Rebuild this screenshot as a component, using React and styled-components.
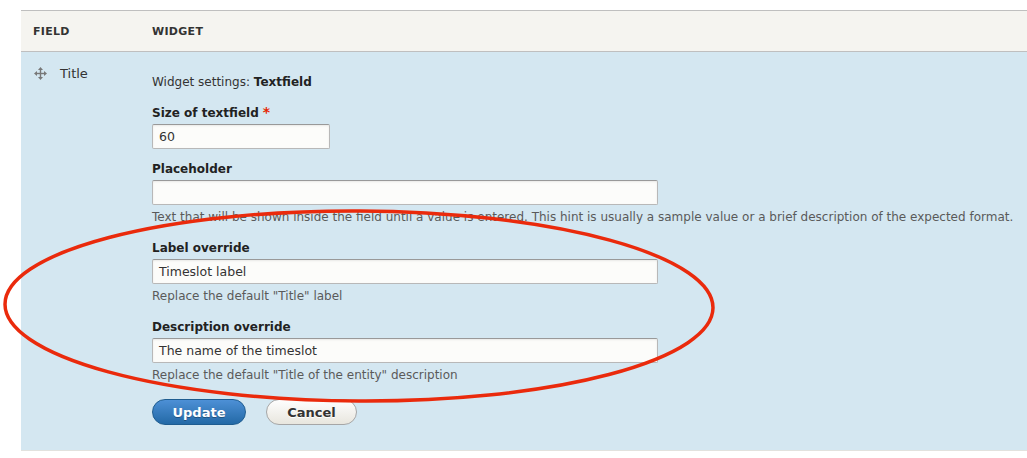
import React from 'react';
import styled, { createGlobalStyle } from 'styled-components';

const GlobalStyle = createGlobalStyle`
  html, body {
    margin: 0;
    padding: 0;
    background: #ffffff;
  }
  body {
    font-family: "DejaVu Sans", Verdana, sans-serif;
    color: #222;
  }
`;

const Page = styled.div`
  position: relative;
  width: 1027px;
  height: 458px;
  padding: 10px 0 0 21px;
  box-sizing: border-box;
  overflow: hidden;
`;

const Table = styled.div`
  border-top: 1px solid #bfbfbf;
`;

const HeaderRow = styled.div`
  display: grid;
  grid-template-columns: 119px 1fr;
  height: 40px;
  align-items: center;
  background: #f5f4f0;
  border-bottom: 1px solid #bfbfbf;
`;

const HeaderCell = styled.div`
  padding-left: 12px;
  font-size: 11px;
  font-weight: bold;
  color: #333;
  letter-spacing: 0.3px;
  text-transform: uppercase;
`;

const BodyRow = styled.div`
  display: grid;
  grid-template-columns: 119px 1fr;
  height: 398px;
  background: #d4e7f1;
  border-bottom: 1px solid #e2e2de;
`;

const FieldCell = styled.div`
  display: flex;
  align-items: center;
  gap: 13px;
  padding: 12px 0 0 13px;
  height: 18px;
  font-size: 13px;
  color: #333;
`;

const WidgetCell = styled.div`
  padding: 21px 0 0 12px;
  font-size: 12px;
`;

const Settings = styled.div`
  line-height: 18px;
  color: #333;
  margin-bottom: 12px;

  b {
    color: #222;
  }
`;

const FormItem = styled.div`
  margin-bottom: ${(p) => (p.$tight ? 11 : 14)}px;
`;

const Label = styled.div`
  font-weight: bold;
  line-height: 18px;
  color: #222;
  margin-bottom: 2px;
`;

const Required = styled.span`
  color: #e62600;
  font-size: 14px;
  margin-left: 4px;
`;

const Input = styled.div`
  box-sizing: border-box;
  width: ${(p) => p.$width}px;
  height: 25px;
  padding: 0 6px;
  display: flex;
  align-items: center;
  background: #fcfcfa;
  border: 1px solid #b8b8b8;
  border-top-color: #999;
  border-radius: 2px;
  box-shadow: inset 0 1px 2px rgba(0, 0, 0, 0.08);
  font-size: 12.5px;
  color: #333;
`;

const Description = styled.div`
  margin-top: 4px;
  font-size: 12px;
  line-height: 16px;
  color: #5a5a5a;
  white-space: nowrap;
`;

const Actions = styled.div`
  display: flex;
  gap: 20px;
  margin-top: 16px;
`;

const Button = styled.div`
  box-sizing: border-box;
  height: 26px;
  display: flex;
  align-items: center;
  justify-content: center;
  border-radius: 20px;
  font-size: 13px;
  font-weight: bold;
  width: ${(p) => p.$width}px;
  color: ${(p) => (p.$primary ? '#fff' : '#333')};
  border: 1px solid ${(p) => (p.$primary ? '#1e5c90' : '#a6a6a6')};
  background: ${(p) =>
    p.$primary
      ? 'linear-gradient(#4d90d6, #2369a6)'
      : 'linear-gradient(#fefefe, #e8e6de)'};
  text-shadow: ${(p) => (p.$primary ? '0 1px 0 rgba(0,0,0,0.3)' : '0 1px 0 #fff')};
`;

const Overlay = styled.svg`
  position: absolute;
  left: 0;
  top: 0;
  pointer-events: none;
`;

const DragIcon = () => (
  <svg width="13" height="13" viewBox="0 0 13 13" fill="#787878">
    <rect x="5.8" y="2" width="1.4" height="9" />
    <rect x="2" y="5.8" width="9" height="1.4" />
    <path d="M6.5 0 L9 3 L4 3 Z" />
    <path d="M6.5 13 L9 10 L4 10 Z" />
    <path d="M0 6.5 L3 4 L3 9 Z" />
    <path d="M13 6.5 L10 4 L10 9 Z" />
  </svg>
);

export default function App() {
  return (
    <>
      <GlobalStyle />
      <Page>
        <Table>
          <HeaderRow>
            <HeaderCell>Field</HeaderCell>
            <HeaderCell>Widget</HeaderCell>
          </HeaderRow>
          <BodyRow>
            <div>
              <FieldCell>
                <DragIcon />
                Title
              </FieldCell>
            </div>
            <WidgetCell>
              <Settings>
                Widget settings: <b>Textfield</b>
              </Settings>
              <FormItem $tight>
                <Label>
                  Size of textfield<Required>*</Required>
                </Label>
                <Input $width={178}>60</Input>
              </FormItem>
              <FormItem>
                <Label>Placeholder</Label>
                <Input $width={506} />
                <Description>
                  Text that will be shown inside the field until a value is entered. This hint is usually a sample value or a brief description of the expected format.
                </Description>
              </FormItem>
              <FormItem>
                <Label>Label override</Label>
                <Input $width={506}>Timeslot label</Input>
                <Description>Replace the default "Title" label</Description>
              </FormItem>
              <FormItem>
                <Label>Description override</Label>
                <Input $width={506}>The name of the timeslot</Input>
                <Description>Replace the default "Title of the entity" description</Description>
              </FormItem>
              <Actions>
                <Button $primary $width={94}>Update</Button>
                <Button $width={91}>Cancel</Button>
              </Actions>
            </WidgetCell>
          </BodyRow>
        </Table>
        <Overlay width="1027" height="458">
          <ellipse
            cx="359"
            cy="306"
            rx="354"
            ry="95"
            fill="none"
            stroke="#ea2a0c"
            strokeWidth="3.5"
            transform="rotate(0.3 359 306)"
          />
        </Overlay>
      </Page>
    </>
  );
}
